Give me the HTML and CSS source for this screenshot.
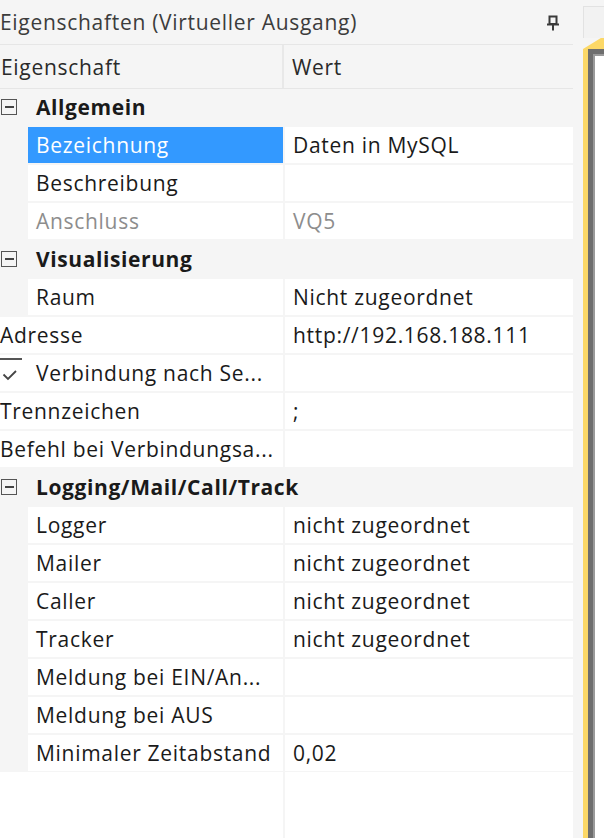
FILE: index.html
```html
<!DOCTYPE html>
<html lang="de">
<head>
<meta charset="utf-8">
<title>Eigenschaften</title>
<link rel="stylesheet" href="styles.css">
</head>
<body>
<div class="page">
  <div class="panel">
    <div class="titlebar">
      <span class="title">Eigenschaften (Virtueller Ausgang)</span>
      <svg class="pin" width="14" height="16" viewBox="0 0 14 16">
        <path d="M3.5 1.5h7v7.5h-7z" fill="none" stroke="#3a3a3a" stroke-width="2"/>
        <path d="M1 9.5h12" stroke="#3a3a3a" stroke-width="2"/>
        <path d="M7 10v5.5" stroke="#3a3a3a" stroke-width="2"/>
      </svg>
    </div>
    <div class="header">
      <div class="hcell hname">Eigenschaft</div>
      <div class="hcell hvalue">Wert</div>
    </div>
    <div class="rows">
      <div class="row cat"><span class="toggle"></span><span class="cat-label">Allgemein</span></div>
      <div class="row child"><div class="name selected">Bezeichnung</div><div class="value">Daten in MySQL</div></div>
      <div class="row child"><div class="name">Beschreibung</div><div class="value"></div></div>
      <div class="row child disabled"><div class="name">Anschluss</div><div class="value">VQ5</div></div>
      <div class="row cat"><span class="toggle"></span><span class="cat-label">Visualisierung</span></div>
      <div class="row child"><div class="name">Raum</div><div class="value">Nicht zugeordnet</div></div>
      <div class="row top"><div class="name">Adresse</div><div class="value">http://192.168.188.111</div></div>
      <div class="row top"><div class="name check"><span class="checkbar"></span><svg class="tick" width="16" height="12" viewBox="0 0 16 12"><path d="M1.5 5.5l4.5 4.5 8-8" fill="none" stroke="#444" stroke-width="1.8"/></svg>Verbindung nach Se...</div><div class="value"></div></div>
      <div class="row top"><div class="name">Trennzeichen</div><div class="value">;</div></div>
      <div class="row top"><div class="name">Befehl bei Verbindungsa...</div><div class="value"></div></div>
      <div class="row cat"><span class="toggle"></span><span class="cat-label">Logging/Mail/Call/Track</span></div>
      <div class="row child"><div class="name">Logger</div><div class="value">nicht zugeordnet</div></div>
      <div class="row child"><div class="name">Mailer</div><div class="value">nicht zugeordnet</div></div>
      <div class="row child"><div class="name">Caller</div><div class="value">nicht zugeordnet</div></div>
      <div class="row child"><div class="name">Tracker</div><div class="value">nicht zugeordnet</div></div>
      <div class="row child"><div class="name">Meldung bei EIN/An...</div><div class="value"></div></div>
      <div class="row child"><div class="name">Meldung bei AUS</div><div class="value"></div></div>
      <div class="row child"><div class="name">Minimaler Zeitabstand</div><div class="value">0,02</div></div>
    </div>
    <div class="filler"><div class="filler-col"></div></div>
  </div>
  <div class="side">
    <div class="tab"></div>
    <div class="accent"></div>
    <div class="frame"><div class="frame-in"></div></div>
  </div>
</div>
</body>
</html>
```
FILE: styles.css
```css
html, body {
  margin: 0;
  padding: 0;
  height: 100%;
}
body {
  background: #f5f5f5;
  font-family: "Open Sans", "Noto Sans", sans-serif;
  font-size: 21px;
  letter-spacing: 0.7px;
  color: #1a1a1a;
  overflow: hidden;
}
.page {
  display: flex;
  height: 838px;
}
.panel {
  width: 583px;
  display: flex;
  flex-direction: column;
  background: #f5f5f5;
}
.titlebar {
  height: 44px;
  display: flex;
  align-items: center;
  justify-content: space-between;
  padding-right: 23px;
  box-sizing: border-box;
}
.title {
  color: #3c3c3c;
  white-space: nowrap;
}
.pin {
  margin-top: 2px;
  flex: none;
}
.header {
  width: 573px;
  height: 45px;
  display: flex;
  border-top: 1px solid #e6e6e6;
  border-bottom: 1px solid #e6e6e6;
  box-sizing: border-box;
}
.hcell {
  display: flex;
  align-items: center;
  color: #2a2a2a;
}
.hname {
  width: 284px;
  border-right: 2px solid #e8e8e8;
  box-sizing: border-box;
  padding-left: 1px;
}
.hvalue {
  flex: 1;
  padding-left: 8px;
}
.rows {
  width: 573px;
  display: flex;
  flex-direction: column;
}
.row {
  height: 36px;
  margin-bottom: 2px;
  display: flex;
  align-items: stretch;
}
.row.cat {
  align-items: center;
}
.toggle {
  width: 16px;
  height: 16px;
  margin-left: 1px;
  box-sizing: border-box;
  border: 1.5px solid #555;
  position: relative;
  flex: none;
}
.toggle::after {
  content: "";
  position: absolute;
  left: 2.5px;
  right: 2.5px;
  top: 6px;
  height: 1.5px;
  background: #444;
}
.cat-label {
  font-weight: 700;
  margin-left: 19px;
  color: #1a1a1a;
  letter-spacing: 0.6px;
}
.name, .value {
  background: #fff;
  display: flex;
  align-items: center;
  white-space: nowrap;
  overflow: hidden;
}
.name {
  width: 255px;
  padding-left: 8px;
  box-sizing: border-box;
  margin-right: 2px;
}
.row.child .name {
  margin-left: 28px;
}
.row.top .name {
  width: 283px;
}
.row.top .name.check {
  padding-left: 36px;
  position: relative;
}
.checkbar {
  position: absolute;
  left: 0;
  top: 3px;
  width: 22px;
  height: 1.5px;
  background: #555;
}
.tick {
  position: absolute;
  left: 2px;
  top: 14px;
}
.value {
  flex: 1;
  padding-left: 8px;
}
.name.selected {
  background: #3399ff;
  color: #fff;
}
.row.disabled .name, .row.disabled .value {
  color: #8d8d8d;
}
.row.top .name:not(.check) {
  padding-left: 0;
}
.filler {
  flex: 1;
  width: 573px;
  background: #fff;
  margin-top: -1px;
}
.filler-col {
  width: 283px;
  height: 100%;
  border-right: 2px solid #f5f5f5;
}
.side {
  flex: 1;
  display: flex;
  flex-direction: column;
}
.tab {
  height: 31px;
  margin-top: 6px;
  background: #f2f2f2;
  border-left: 1px solid #e2e2e2;
  border-top: 1px solid #e2e2e2;
}
.accent {
  height: 11px;
  background: #fcd867;
  clip-path: polygon(0 100%, 85% 0, 100% 0, 100% 100%);
}
.frame {
  flex: 1;
  border-left: 5px solid #fcd867;
  display: flex;
}
.frame-in {
  flex: 1;
  background: #fff;
  border-left: 5px solid #6e6e6e;
  border-top: 5px solid #6e6e6e;
  box-shadow: inset 2px 2px 0 #9a9a9a;
}
```
